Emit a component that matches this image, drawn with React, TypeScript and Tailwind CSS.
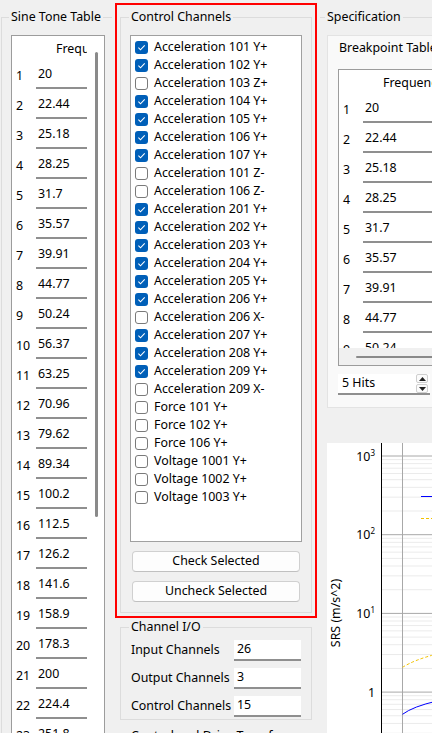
import React from "react";

type Channel = { name: string; checked: boolean };

const channels: Channel[] = [
  { name: "Acceleration 101 Y+", checked: true },
  { name: "Acceleration 102 Y+", checked: true },
  { name: "Acceleration 103 Z+", checked: false },
  { name: "Acceleration 104 Y+", checked: true },
  { name: "Acceleration 105 Y+", checked: true },
  { name: "Acceleration 106 Y+", checked: true },
  { name: "Acceleration 107 Y+", checked: true },
  { name: "Acceleration 101 Z-", checked: false },
  { name: "Acceleration 106 Z-", checked: false },
  { name: "Acceleration 201 Y+", checked: true },
  { name: "Acceleration 202 Y+", checked: true },
  { name: "Acceleration 203 Y+", checked: true },
  { name: "Acceleration 204 Y+", checked: true },
  { name: "Acceleration 205 Y+", checked: true },
  { name: "Acceleration 206 Y+", checked: true },
  { name: "Acceleration 206 X-", checked: false },
  { name: "Acceleration 207 Y+", checked: true },
  { name: "Acceleration 208 Y+", checked: true },
  { name: "Acceleration 209 Y+", checked: true },
  { name: "Acceleration 209 X-", checked: false },
  { name: "Force 101 Y+", checked: false },
  { name: "Force 102 Y+", checked: false },
  { name: "Force 106 Y+", checked: false },
  { name: "Voltage 1001 Y+", checked: false },
  { name: "Voltage 1002 Y+", checked: false },
  { name: "Voltage 1003 Y+", checked: false },
];

const frequencies = [
  "20", "22.44", "25.18", "28.25", "31.7", "35.57", "39.91", "44.77",
  "50.24", "56.37", "63.25", "70.96", "79.62", "89.34", "100.2", "112.5",
  "126.2", "141.6", "158.9", "178.3", "200", "224.4", "251.8",
];

type GroupProps = {
  title: string;
  className?: string;
  legendClass?: string;
  children?: React.ReactNode;
};

function GroupBox({ title, className = "", legendClass = "ml-[8px]", children }: GroupProps) {
  return (
    <fieldset className={`border-[#dcdcdc] ${className}`}>
      <legend className={`${legendClass} px-[2px] leading-[16px] whitespace-nowrap`}>{title}</legend>
      {children}
    </fieldset>
  );
}

function CheckBox({ checked }: { checked: boolean }) {
  if (checked) {
    return (
      <span className="flex h-[13px] w-[13px] shrink-0 items-center justify-center rounded-[3px] bg-[#005fb8]">
        <svg width="13" height="13" viewBox="0 0 13 13">
          <path d="M3.4 6.7 L5.5 8.8 L9.7 4.4" fill="none" stroke="#fff" strokeWidth="1.1" />
        </svg>
      </span>
    );
  }
  return <span className="h-[13px] w-[13px] shrink-0 rounded-[3px] border border-[#7a7a7a] bg-white" />;
}

function FreqRows({ values, cellWidth }: { values: string[]; cellWidth: string }) {
  return (
    <>
      {values.map((v, i) => (
        <div key={i} className="flex h-[30px]">
          <div className="flex h-[28px] w-[24px] shrink-0 items-center pl-[4px] pt-[2px]">{i + 1}</div>
          <div className={`flex h-[28px] ${cellWidth} shrink-0 items-center border-b-2 border-[#8f8f8f] bg-white pl-[2px]`}>
            {v}
          </div>
        </div>
      ))}
    </>
  );
}

function TableHeader({ width }: { width: string }) {
  return (
    <div className="flex h-[25px]">
      <div className="w-[24px] shrink-0" />
      <div className={`${width} shrink-0 overflow-hidden whitespace-nowrap pl-[20px] leading-[25px]`}>Frequency</div>
    </div>
  );
}

function SpinArrow({ up }: { up?: boolean }) {
  return (
    <span className="flex h-[9px] w-[12px] items-center justify-center rounded-[2px] border border-[#cfcfcf] bg-[#fbfbfb]">
      <svg width="7" height="4" viewBox="0 0 7 4">
        <polygon points={up ? "0,4 3.5,0 7,4" : "0,0 3.5,4 7,0"} fill="#222" />
      </svg>
    </span>
  );
}

function SrsChart() {
  const decade = 78.7;
  const majors = [13, 91.7, 170.4, 249.1];
  const minors: number[] = [];
  [...majors, 249.1 + decade].forEach((m) => {
    for (let k = 2; k <= 9; k++) minors.push(m - Math.log10(k) * decade);
  });
  const exps = ["3", "2", "1"];

  return (
    <svg width="110" height="290" viewBox="0 0 110 290" className="block">
      {minors.map((y, i) => (
        <line key={i} x1="55" x2="110" y1={y} y2={y} stroke="#ebebeb" strokeWidth="1" />
      ))}
      {majors.map((y, i) => (
        <line key={i} x1="55" x2="110" y1={y} y2={y} stroke="#a8a8a8" strokeWidth="1" />
      ))}
      <line x1="75.5" x2="75.5" y1="0" y2="290" stroke="#a8a8a8" strokeWidth="1" />
      <line x1="54.5" x2="54.5" y1="0" y2="290" stroke="#000" strokeWidth="1" />

      {exps.map((e, i) => (
        <text key={e} x="48" y={majors[i] + 4.5} textAnchor="end" fontSize="12.4" fill="#000">
          10<tspan fontSize="8" dy="-5">{e}</tspan>
        </text>
      ))}
      <text x="48" y={majors[3] + 4.5} textAnchor="end" fontSize="12.4" fill="#000">1</text>

      <text transform="rotate(-90)" x="-170" y="13" textAnchor="middle" fontSize="12.4" fill="#000">
        SRS (m/s^2)
      </text>

      {/* legend samples */}
      <line x1="94" x2="110" y1="53.5" y2="53.5" stroke="#0000ff" strokeWidth="1" />
      <line x1="94" x2="110" y1="75.5" y2="75.5" stroke="#f2c200" strokeWidth="1" strokeDasharray="3 2" />

      {/* traces */}
      <path d="M75.5 224.3 Q88 216.5 110 211" fill="none" stroke="#f2c200" strokeWidth="1" strokeDasharray="3 2" />
      <path d="M75.5 271.3 Q86 263.5 110 258" fill="none" stroke="#0000ff" strokeWidth="1" />
    </svg>
  );
}

export default function App() {
  return (
    <div className="flex h-[733px] w-[432px] overflow-hidden bg-[#f0f0f0] font-['Noto_Sans',sans-serif] text-[12.4px] text-black">
      {/* left column */}
      <div className="w-[115px] shrink-0">
        <GroupBox title="Sine Tone Table" className="ml-[1px] mt-[9px] h-[740px] w-[111px] border-l border-t" legendClass="ml-[7px]">
          <div className="relative ml-[9px] mt-[10px] w-[94px] border border-[#9c9c9c] bg-white">
            <TableHeader width="w-[51px]" />
            <FreqRows values={frequencies} cellWidth="w-[51px]" />
            <div className="absolute left-[83px] top-[16px] h-[465px] w-[3px] rounded-full bg-[#8a8a8a]" />
          </div>
        </GroupBox>
      </div>

      {/* middle column */}
      <div className="w-[205px] shrink-0">
        <div className="mt-[3px] h-[615px] w-[202px] border-2 border-[#ff0000]">
          <GroupBox title="Control Channels" className="ml-[3px] mt-[4px] h-[604px] w-[192px] border">
            <div className="ml-[9px] mt-[10px] h-[507px] w-[172px] border border-[#a0a0a0] bg-white pl-[4px] pt-[2px]">
              {channels.map((c) => (
                <div key={c.name} className="flex h-[18px] items-center gap-[6px] whitespace-nowrap">
                  <CheckBox checked={c.checked} />
                  <span>{c.name}</span>
                </div>
              ))}
            </div>
            <button className="ml-[11px] mt-[9px] flex h-[21px] w-[168px] items-center justify-center rounded-[4px] border border-[#d0d0d0] border-b-[#c0c0c0] bg-[#fdfdfd]">
              Check Selected
            </button>
            <button className="ml-[11px] mt-[9px] flex h-[21px] w-[168px] items-center justify-center rounded-[4px] border border-[#d0d0d0] border-b-[#c0c0c0] bg-[#fdfdfd]">
              Uncheck Selected
            </button>
          </GroupBox>
        </div>

        <GroupBox title="Channel I/O" className="ml-[5px] mt-[1px] h-[101px] w-[192px] border">
          <div className="mt-[5px] flex flex-col gap-[7px] pl-[10px]">
            {[
              ["Input Channels", "26"],
              ["Output Channels", "3"],
              ["Control Channels", "15"],
            ].map(([label, value]) => (
              <div key={label} className="flex h-[21px] items-center">
                <span className="w-[103px] shrink-0 whitespace-nowrap">{label}</span>
                <div className="flex h-[21px] w-[67px] items-center border-b-2 border-[#8f8f8f] bg-white pl-[3px]">{value}</div>
              </div>
            ))}
          </div>
        </GroupBox>

        <GroupBox title="Control and Drive Transfer" className="ml-[5px] mt-[8px] h-[40px] w-[192px] border" />
      </div>

      {/* right column */}
      <div className="w-[112px] shrink-0">
        <GroupBox title="Specification" className="mt-[9px] w-[120px] border-t" legendClass="ml-[5px]">
          <div className="ml-[7px] mt-[10px] h-[373px] w-[115px] border border-[#e3e3e3] bg-[#f9f9f9]">
            <div className="whitespace-nowrap pl-[11px] pt-[4px] leading-[16px]">Breakpoint Table</div>
            <div className="ml-[10px] mt-[13px] w-[110px] border border-[#9c9c9c] bg-white">
              <div className="h-[278px] overflow-hidden">
                <TableHeader width="w-[84px]" />
                <FreqRows values={frequencies.slice(0, 9)} cellWidth="w-[84px]" />
              </div>
              <div className="relative h-[17px] bg-[#f0f0f0]">
                <div className="absolute left-[17px] top-[8px] h-[2px] w-[100px] rounded-full bg-[#8a8a8a]" />
              </div>
            </div>
            <div className="ml-[10px] mt-[8px] flex h-[21px] w-[92px] items-center justify-between border-b-2 border-[#8f8f8f] bg-white pl-[4px] pr-[2px]">
              <span>5 Hits</span>
              <div className="flex flex-col gap-[1px]">
                <SpinArrow up />
                <SpinArrow />
              </div>
            </div>
          </div>
          <div className="ml-[7px] mt-[35px] h-[290px] w-[110px] bg-white">
            <SrsChart />
          </div>
        </GroupBox>
      </div>
    </div>
  );
}
